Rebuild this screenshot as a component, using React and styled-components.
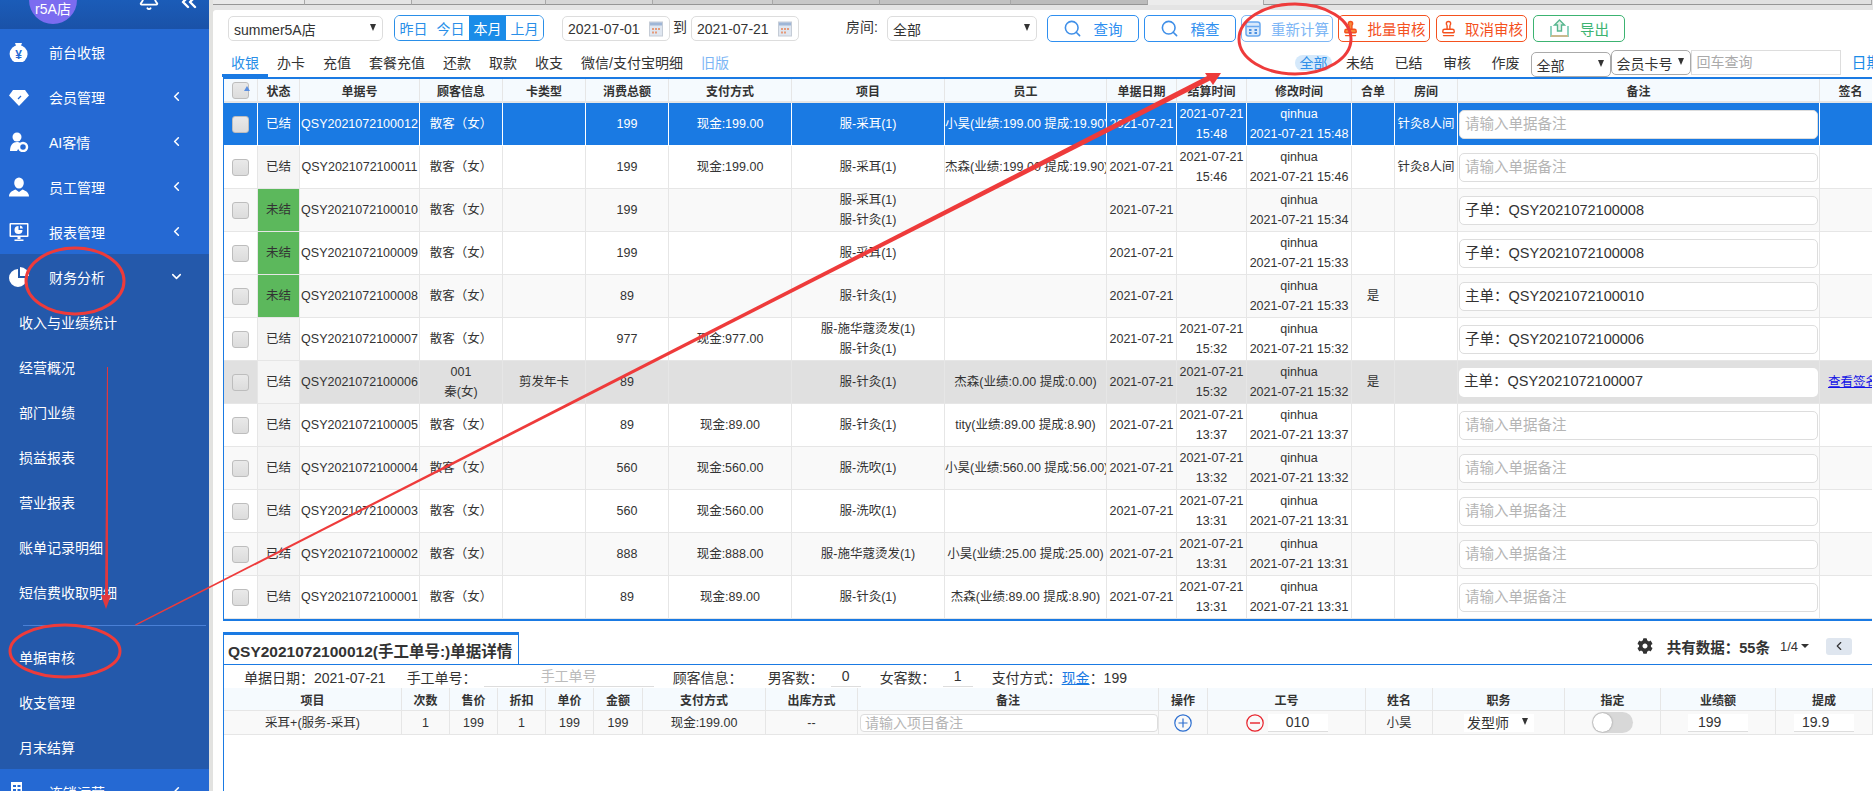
import React from 'react';
import styled, { createGlobalStyle } from 'styled-components';
import { Bell, ChevronsLeft, ChevronLeft, ChevronDown, Search, Stamp } from 'lucide-react';
import { FaCog } from 'react-icons/fa';

const Global = createGlobalStyle`
  html, body, #root { margin: 0; padding: 0; height: 100%; }
  body { overflow: hidden; background: #fff; color: #333; font: 13px "Liberation Sans", "Noto Sans CJK SC", sans-serif; }
  * { box-sizing: border-box; }
`;

const Page = styled.div`
  position: relative; display: flex; width: 1873px; height: 791px; overflow: hidden; background: #e2e2e0;
`;

/* ---------- sidebar ---------- */
const Sidebar = styled.aside`
  flex: none; width: 209px; height: 791px; overflow: hidden; background: #2569d3; color: #fff; font-size: 14px;
`;
const SideHead = styled.div`
  position: relative; height: 29px; overflow: hidden; display: flex; align-items: flex-end;
  background: linear-gradient(#1b5cb8, #1a52a8); padding: 0 0 5px 29px;
`;
const Avatar = styled.div`
  flex: none; width: 48px; height: 48px; border-radius: 50%; background: #7b6cf0;
  display: flex; align-items: center; justify-content: center; padding-top: 16px; font-size: 14px; color: #fff;
`;
const HeadIcon = styled.span`
  flex: none; display: flex; margin-left: ${p => p.$ml}px; margin-bottom: ${p => p.$mb}px; color: #fff;
`;
const SideItem = styled.div`
  position: relative; height: 45px; display: flex; align-items: center; padding-left: 9px; background: ${p => p.$dark ? '#2459ab' : 'transparent'};
`;
const SideIcon = styled.span`
  flex: none; width: 20px; height: 20px; display: flex; margin-right: 20px;
`;
const SideText = styled.span`
  flex: 1; letter-spacing: 0; white-space: nowrap;
`;
const SideChevron = styled.span`
  flex: none; display: flex; margin-right: 25px; color: #fff;
`;
const SubGroup = styled.div`
  background: #2459ab;
`;
const SubItem = styled.div`
  height: 45px; display: flex; align-items: center; padding-left: 19px;
`;
const SideRule = styled.div`
  height: 1px; margin: 11px 3px 8px 23px; background: #4a80d6;
`;

/* ---------- main ---------- */
const Main = styled.main`
  flex: none; width: 1660px; height: 791px; margin-left: 4px; display: flex; flex-direction: column; overflow: hidden;
`;
const TabStrip = styled.div`
  flex: none; height: 10px; background: #e4e4e4; display: flex; align-items: flex-start;
`;
const BrowserTab = styled.div`
  flex: none; width: ${p => p.$w}px; height: 5px; background: ${p => p.$active ? '#ececec' : p.$bg || '#cfcfcf'};
  border-bottom: ${p => p.$active ? 'none' : '1px solid #969696'};
  border-right: 1px solid #a8a8a8;
`;
const Sheet = styled.div`
  flex: 1; display: flex; flex-direction: column; background: #fff; border-radius: 3px 0 0 0; min-height: 0;
`;
const Toolbar = styled.div`
  flex: none; height: 40px; padding: 5px 0 0 15px; display: flex; align-items: flex-start; white-space: nowrap; font-size: 14px;
`;
const SelectBox = styled.div`
  flex: none; width: ${p => p.$w}px; height: ${p => p.$h || 25}px; margin-left: ${p => p.$ml || 0}px;
  margin-top: ${p => p.$mt || 1}px;
  display: flex; align-items: center; justify-content: space-between; padding: 0 6px 0 5px; font-size: 14px;
  background: #fff; border: 1px solid ${p => p.$line || '#ddd'}; border-radius: 5px; color: #333;
`;
const Caret = styled.span`
  flex: none; width: 0; height: 0; margin-bottom: 3px; border-left: 3.5px solid transparent; border-right: 3.5px solid transparent; border-top: 7px solid #333;
`;
const Segment = styled.div`
  flex: none; width: 150px; height: 26px; margin-left: 11px; display: flex; border: 1px solid #2a8fe8; border-radius: 6px; overflow: hidden;
`;
const SegItem = styled.div`
  flex: 1; display: flex; align-items: center; justify-content: center; color: ${p => p.$on ? '#fff' : '#2a8fe8'}; background: ${p => p.$on ? '#1a8ce8' : '#fff'};
`;
const PlainLabel = styled.span`
  flex: none; margin-left: ${p => p.$ml}px; line-height: 24px; color: #333;
`;
const ActionButton = styled.button`
  flex: none; width: ${p => p.$w || 92}px; height: 27px; margin-left: ${p => p.$ml}px; padding: 0; display: flex; align-items: center; justify-content: center; gap: ${p => p.$gap || 11}px;
  font: inherit; font-size: 14.5px; background: #fff; border: 1px solid ${p => p.$c}; border-radius: 5px; color: ${p => p.$c};
`;
const TabRow = styled.div`
  flex: none; height: 27px; display: flex; white-space: nowrap; font-size: 14px;
`;
const TabsBlock = styled.div`
  flex: none; width: 1082px; padding-left: 9px; display: flex; gap: 0;
`;
const TabLink = styled.div`
  flex: none; height: 27px; padding: 3px 9px 0; line-height: 20px; color: ${p => p.$on ? '#2a8fe8' : p.$old ? '#7db6f5' : '#333'};
  border-bottom: 3px solid ${p => p.$on ? '#1a7ae3' : 'transparent'};
`;
const FilterRow = styled.div`
  flex: none; display: flex; align-items: flex-start; padding-top: 1px;
`;
const FilterLink = styled.span`
  flex: none; height: 16px; line-height: 16px; margin: 4px 0 0; padding: 0 ${p => p.$on ? 4.5 : 0}px; margin-right: ${p => p.$on ? 14 : 20.5}px; border-radius: 8px;
  color: ${p => p.$on ? '#2e8fe8' : '#333'}; background: ${p => p.$on ? '#d5e9fb' : 'transparent'};
`;
const QueryInput = styled.div`
  flex: none; width: 150px; height: 25px; margin-top: -1px; padding-left: 5px; line-height: 23px; border: 1px solid #ddd; color: #aaa; font-size: 14px;
`;
const DateLink = styled.span`
  flex: none; margin: 2px 0 0 11px; color: #1a8ce8; font-size: 15px; line-height: 20px;
`;

/* ---------- tables ---------- */
const TableFrame = styled.div`
  flex: none; width: 1649px; margin-left: 10px; overflow: hidden; border-top: 2px solid #1a7ae3; border-left: 1px solid #1a7ae3; border-bottom: 2px solid #1a7ae3;
`;
const Grid = styled.table`
  table-layout: fixed; border-collapse: separate; border-spacing: 0; width: ${p => p.$w}px; font-size: 12.5px;
`;
const Head = styled.th`
  height: ${p => p.$h}px; padding: 0; position: relative; font-weight: 700; font-size: 12px; color: #333; background: #f5fafe; text-align: center; white-space: nowrap;
  border-right: 1px solid #e6e6e6; border-bottom: ${p => p.$thick ? 2 : 1}px solid #e6e6e6;
`;
const Row = styled.tr`
  background: ${p => p.$sel ? '#1a7ae3' : p.$mark ? '#e0e0e0' : p.$alt ? '#f9f9f9' : '#fff'};
  color: ${p => p.$sel ? '#fff' : '#333'};
`;
const Cell = styled.td`
  height: ${p => p.$h}px; padding: 0 ${p => p.$pad ?? 0}px; text-align: ${p => p.$left ? 'left' : 'center'}; white-space: nowrap; line-height: 20px; overflow: hidden;
  border-right: 1px solid ${p => p.$sel ? '#fff' : '#e6e6e6'}; border-bottom: 1px solid ${p => p.$sel ? '#fff' : '#e6e6e6'};
  background: ${p => p.$bg || 'transparent'};
`;
const Check = styled.span`
  display: inline-block; vertical-align: middle; width: 17px; height: 17px; background: linear-gradient(#e9e9e9, #dcdcdc); border: 1px solid #bdbdbd; border-radius: 3px;
`;
const SortMark = styled.span`
  position: absolute; right: 7px; top: 7px; width: 0; height: 0; border-left: 3px solid transparent; border-right: 3px solid transparent; border-bottom: 5px solid #5b8fe0;
`;
const Line = styled.div`
  line-height: 20px;
`;
const NoteInput = styled.div`
  width: 359px; height: 29px; margin-left: 1px; padding-left: 5px; text-align: left; line-height: 27px; font-size: 14.5px; background: #fff; border-radius: 5px;
  border: ${p => p.$bare ? 'none' : '1px solid #ddd'}; color: ${p => p.$empty ? '#b5b5b5' : '#333'};
`;
const SignLink = styled.a`
  display: block; margin-left: 8px; text-align: left; color: #1414e6; text-decoration: underline; font-size: 12.5px;
`;

/* ---------- detail ---------- */
const Detail = styled.section`
  flex: 1; width: 1649px; margin: 11px 0 0 10px; display: flex; flex-direction: column; border-left: 1px solid #1a7ae3; min-height: 0;
`;
const DetailHead = styled.div`
  flex: none; height: 33px; display: flex; align-items: center; border-bottom: 1px solid #1a7ae3; white-space: nowrap;
`;
const DetailTab = styled.div`
  flex: none; width: 295px; height: 32px; padding: 3px 0 0 4px; line-height: 28px; font-size: 15.5px; font-weight: 700; color: #333; border-top: 3px solid #1a7ae3; border-right: 1px solid #1a7ae3;
`;
const Pager = styled.div`
  margin-left: auto; padding: 0 20px 4px 0; display: flex; align-items: center; font-size: 14.5px; font-weight: 700; color: #333;
`;
const PageNum = styled.span`
  margin-left: 10px; font-weight: 400; font-size: 13px; display: flex; align-items: center; gap: 3px;
`;
const DropTip = styled.span`
  width: 0; height: 0; border-left: 4px solid transparent; border-right: 4px solid transparent; border-top: 4px solid #333;
`;
const PageBtn = styled.span`
  width: 26px; height: 17px; margin-left: 17px; border-radius: 3px; background: #dfe6ef; display: flex; align-items: center; justify-content: center;
`;
const InfoRow = styled.div`
  flex: none; height: 23px; padding-left: 20px; display: flex; align-items: center; white-space: nowrap; font-size: 14px; color: #333;
`;
const InfoItem = styled.span`
  flex: none; margin-left: ${p => p.$ml || 0}px;
`;
const UnderInput = styled.span`
  flex: none; width: ${p => p.$w}px; height: 20px; margin-left: 7px; text-align: center; line-height: 19px; border-bottom: 1px solid #ddd; color: ${p => p.$ph ? '#bbb' : '#333'};
`;
const PayLink = styled.a`
  color: #1a7ae3; text-decoration: underline;
`;
const DetailNote = styled.div`
  width: 298px; height: 18px; margin-left: 2px; padding-left: 4px; text-align: left; font-size: 14px; line-height: 16px; color: #b5b5b5; background: #fff; border: 1px solid #ddd; border-radius: 4px;
`;
const RoundBtn = styled.span`
  display: inline-flex; vertical-align: middle;
`;
const CodeBox = styled.div`
  display: flex; align-items: center; justify-content: center; gap: 4px;
`;
const NumInput = styled.span`
  display: inline-block; width: ${p => p.$w}px; height: 18px; padding-left: ${p => p.$pl || 0}px; line-height: 17px; font-size: 14px; text-align: ${p => p.$pl ? 'left' : 'center'}; background: #fff; border-bottom: 1px solid #ddd;
`;
const RoleSelect = styled.div`
  width: 70px; height: 18px; margin-left: 31px; padding: 0 6px 0 3px; display: flex; align-items: center; justify-content: space-between; font-size: 14px; background: #fff;
`;
const Toggle = styled.span`
  display: inline-block; position: relative; width: 41px; height: 21px; vertical-align: middle; background: #d8d8d8; border-radius: 11px;
`;
const Knob = styled.span`
  position: absolute; left: 1px; top: 1px; width: 19px; height: 19px; background: #fff; border-radius: 50%; box-shadow: 0 0 2px rgba(0,0,0,.4);
`;
const Annotations = styled.svg`
  position: absolute; left: 0; top: 0; width: 1873px; height: 791px; pointer-events: none;
`;

/* ---------- icons ---------- */
const BLUE = '#2569d3';
const MoneyIcon = () => (
  <svg width="20" height="20" viewBox="0 0 20 20">
    <path d="M6 1h7l-1.5 4h-4z" fill="#fff" />
    <circle cx="9.6" cy="12" r="9" fill="#fff" />
    <text x="9.6" y="16.5" textAnchor="middle" fontSize="12" fontWeight="700" fill={BLUE} fontFamily="Liberation Sans">¥</text>
  </svg>
);
const GemIcon = () => (
  <svg width="20" height="20" viewBox="0 0 20 20">
    <path d="M4 3h12l4 5.5L10 19 0 8.5z" fill="#fff" />
    <path d="M9 12l3-3" stroke={BLUE} strokeWidth="1.3" />
  </svg>
);
const AiIcon = () => (
  <svg width="20" height="20" viewBox="0 0 20 20">
    <circle cx="8" cy="5" r="4.5" fill="#fff" />
    <path d="M1 19c0-6 3-9 7-9 1.500 0 3 .5 4 1.500L8 19z" fill="#fff" />
    <circle cx="14" cy="15" r="4" fill="none" stroke="#fff" strokeWidth="2.500" />
  </svg>
);
const StaffIcon = () => (
  <svg width="20" height="20" viewBox="0 0 20 20">
    <ellipse cx="10" cy="6" rx="4.800" ry="5.500" fill="#fff" />
    <path d="M0 19.500c0-4 3-5.500 6.500-7L10 15l3.500-2.500c3.500 1.500 6.500 3 6.500 7z" fill="#fff" />
  </svg>
);
const ReportIcon = () => (
  <svg width="20" height="20" viewBox="0 0 20 20">
    <rect x="0.500" y="1" width="19" height="14" rx="1" fill="#fff" />
    <rect x="2" y="2.500" width="16" height="11" fill={BLUE} />
    <path d="M9.500 4a4 4 0 1 0 4 4h-4z" fill="#fff" />
    <path d="M11 3.500a3.500 3.500 0 0 1 3 3h-3z" fill="#fff" />
    <path d="M8.500 15h3v2h-3zM5.500 17.500h9V19h-9z" fill="#fff" />
  </svg>
);
const PieIcon = () => (
  <svg width="20" height="20" viewBox="0 0 20 20">
    <path d="M9 2a9 9 0 1 0 9 9H9z" fill="#fff" />
    <path d="M11 0a9 9 0 0 1 9 9h-9z" fill="#fff" />
  </svg>
);
const OfficeIcon = () => (
  <svg width="20" height="20" viewBox="0 0 20 20">
    <path d="M2 0h11v20H2zM13 10h6v10h-6z" fill="#fff" />
    <path d="M4 3h3v2H4zM8.500 3h3v2h-3zM4 7h3v2H4zM8.500 7h3v2h-3z" fill={BLUE} />
  </svg>
);
const CalendarIcon = () => (
  <svg width="14" height="16" viewBox="0 0 14 16">
    <rect x="0.500" y="1" width="13" height="14" fill="#dfe6f0" stroke="#c5ccd6" />
    <rect x="1" y="1.500" width="12" height="3" fill="#9fb6d6" />
    <path d="M3 7h2v2H3zM6 7h2v2H6zM9 7h2v2H9zM3 10.500h2v2H3zM6 10.500h2v2H6z" fill="#e59a7a" />
  </svg>
);
const RecalcIcon = () => (
  <svg width="16" height="16" viewBox="0 0 16 16">
    <rect x="1" y="1" width="14" height="14" rx="2.500" fill="#d9e9fb" stroke="#6aa9ef" strokeWidth="1.500" />
    <path d="M1.500 5.500h13" stroke="#6aa9ef" strokeWidth="1.500" />
    <path d="M4 8h2.500v2H4zM9.500 8H12v2H9.500zM4 11h2.500v2H4zM9.500 11H12v2H9.500z" fill="#4b90e0" />
  </svg>
);
const ExportIcon = () => (
  <svg width="21" height="19" viewBox="0 0 21 19">
    <path d="M2 7v10h17V7" fill="none" stroke="#8fd3c0" strokeWidth="2" />
    <path d="M2 17h17" stroke="#c9b98e" strokeWidth="2" />
    <path d="M10.500 1l5 5h-3v6h-4V6h-3z" fill="#e6f3ea" stroke="#57b68f" strokeWidth="1.400" />
  </svg>
);
const PlusIcon = () => (
  <svg width="18" height="18" viewBox="0 0 18 18">
    <circle cx="9" cy="9" r="8.200" fill="none" stroke="#2d6fd0" strokeWidth="1.200" />
    <path d="M9 4.500v9M4.500 9h9" stroke="#2d6fd0" strokeWidth="1.200" />
  </svg>
);
const MinusIcon = () => (
  <svg width="18" height="18" viewBox="0 0 18 18">
    <circle cx="9" cy="9" r="8.200" fill="none" stroke="#e8212a" strokeWidth="1.200" />
    <path d="M4 9h10" stroke="#e8212a" strokeWidth="1.400" />
  </svg>
);

/* ---------- data ---------- */
const MAIN_COLS = [
  ['', 34], ['状态', 42], ['单据号', 120], ['顾客信息', 83], ['卡类型', 83], ['消费总额', 83], ['支付方式', 123], ['项目', 153],
  ['员工', 162], ['单据日期', 70], ['结算时间', 70], ['修改时间', 105], ['合单', 43], ['房间', 63], ['备注', 362], ['签名', 62],
];
const GUEST = ['散客（女）'];
const ROWS = [
  { st: '已结', no: '12', cu: GUEST, total: '199', pay: '现金:199.00', items: ['服-采耳(1)'], staff: '小昊(业绩:199.00 提成:19.90)', set: '15:48', mod: '15:48', room: '针灸8人间', sel: true },
  { st: '已结', no: '11', cu: GUEST, total: '199', pay: '现金:199.00', items: ['服-采耳(1)'], staff: '杰森(业绩:199.00 提成:19.90)', set: '15:46', mod: '15:46', room: '针灸8人间' },
  { st: '未结', no: '10', cu: GUEST, total: '199', items: ['服-采耳(1)', '服-针灸(1)'], mod: '15:34', note: '子单：QSY2021072100008' },
  { st: '未结', no: '09', cu: GUEST, total: '199', items: ['服-采耳(1)'], mod: '15:33', note: '子单：QSY2021072100008' },
  { st: '未结', no: '08', cu: GUEST, total: '89', items: ['服-针灸(1)'], mod: '15:33', merge: '是', note: '主单：QSY2021072100010' },
  { st: '已结', no: '07', cu: GUEST, total: '977', pay: '现金:977.00', items: ['服-施华蔻烫发(1)', '服-针灸(1)'], set: '15:32', mod: '15:32', note: '子单：QSY2021072100006' },
  { st: '已结', no: '06', cu: ['001', '秦(女)'], card: '剪发年卡', total: '89', items: ['服-针灸(1)'], staff: '杰森(业绩:0.00 提成:0.00)', set: '15:32', mod: '15:32', merge: '是', note: '主单：QSY2021072100007', sign: true, mark: true },
  { st: '已结', no: '05', cu: GUEST, total: '89', pay: '现金:89.00', items: ['服-针灸(1)'], staff: 'tity(业绩:89.00 提成:8.90)', set: '13:37', mod: '13:37' },
  { st: '已结', no: '04', cu: GUEST, total: '560', pay: '现金:560.00', items: ['服-洗吹(1)'], staff: '小昊(业绩:560.00 提成:56.00)', set: '13:32', mod: '13:32' },
  { st: '已结', no: '03', cu: GUEST, total: '560', pay: '现金:560.00', items: ['服-洗吹(1)'], set: '13:31', mod: '13:31' },
  { st: '已结', no: '02', cu: GUEST, total: '888', pay: '现金:888.00', items: ['服-施华蔻烫发(1)'], staff: '小昊(业绩:25.00 提成:25.00)', set: '13:31', mod: '13:31' },
  { st: '已结', no: '01', cu: GUEST, total: '89', pay: '现金:89.00', items: ['服-针灸(1)'], staff: '杰森(业绩:89.00 提成:8.90)', set: '13:31', mod: '13:31' },
];
const DETAIL_COLS = [
  ['项目', 178], ['次数', 48], ['售价', 48], ['折扣', 48], ['单价', 48], ['金额', 49], ['支付方式', 123], ['出库方式', 92], ['备注', 301],
  ['操作', 49], ['工号', 158], ['姓名', 67], ['职务', 132], ['指定', 96], ['业绩额', 115], ['提成', 97],
];
const TOP_ITEMS = [
  ['前台收银', MoneyIcon, false], ['会员管理', GemIcon, true], ['AI客情', AiIcon, true], ['员工管理', StaffIcon, true], ['报表管理', ReportIcon, true],
];
const SUB_ITEMS = ['收入与业绩统计', '经营概况', '部门业绩', '损益报表', '营业报表', '账单记录明细', '短信费收取明细'];
const SUB_ITEMS_2 = ['单据审核', '收支管理', '月末结算'];
const TABS = ['办卡', '充值', '套餐充值', '还款', '取款', '收支', '微信/支付宝明细'];
const STRIP = [[92, '#e9e9e9'], [107, '#e4e4e4'], [134, '#dcdcdc'], [107, '#d6d6d6'], [120, '#cfcfcf'], [107, '#c8c8c8'], [131, '#c2c2c2'], [137, '#bcbcbc']];

function MainRow({ r, i }) {
  const sel = !!r.sel;
  const c = { $h: 43, $sel: sel };
  const stBg = sel ? 'transparent' : r.st === '未结' ? '#5cb85c' : '#f5f5f5';
  const empty = !r.note;
  return (
    <Row $sel={sel} $mark={r.mark} $alt={i % 2 === 0}>
      <Cell {...c}><Check /></Cell>
      <Cell {...c} $bg={stBg}>{r.st}</Cell>
      <Cell {...c}>QSY20210721000{r.no}</Cell>
      <Cell {...c}>{r.cu.map(t => <Line key={t}>{t}</Line>)}</Cell>
      <Cell {...c}>{r.card}</Cell>
      <Cell {...c}>{r.total}</Cell>
      <Cell {...c}>{r.pay}</Cell>
      <Cell {...c}>{r.items.map(t => <Line key={t}>{t}</Line>)}</Cell>
      <Cell {...c}>{r.staff}</Cell>
      <Cell {...c}>2021-07-21</Cell>
      <Cell {...c}>{r.set && <><Line>2021-07-21</Line><Line>{r.set}</Line></>}</Cell>
      <Cell {...c}><Line>qinhua</Line><Line>2021-07-21 {r.mod}</Line></Cell>
      <Cell {...c}>{r.merge}</Cell>
      <Cell {...c}>{r.room}</Cell>
      <Cell {...c}><NoteInput $empty={empty} $bare={r.mark}>{r.note || '请输入单据备注'}</NoteInput></Cell>
      <Cell {...c}>{r.sign && <SignLink>查看签名</SignLink>}</Cell>
    </Row>
  );
}

export default function App() {
  return (
    <Page>
      <Global />
      <Sidebar>
        <SideHead>
          <Avatar>r5A店</Avatar>
          <HeadIcon $ml={61} $mb={13}><Bell size={22} strokeWidth={2} /></HeadIcon>
          <HeadIcon $ml={17} $mb={10}><ChevronsLeft size={24} strokeWidth={2.4} /></HeadIcon>
        </SideHead>
        {TOP_ITEMS.map(([t, Ico, chev]) => (
          <SideItem key={t}>
            <SideIcon><Ico /></SideIcon>
            <SideText>{t}</SideText>
            {chev && <SideChevron><ChevronLeft size={15} strokeWidth={2.5} /></SideChevron>}
          </SideItem>
        ))}
        <SubGroup>
          <SideItem>
            <SideIcon><PieIcon /></SideIcon>
            <SideText>财务分析</SideText>
            <SideChevron><ChevronDown size={15} strokeWidth={2.5} /></SideChevron>
          </SideItem>
          {SUB_ITEMS.map(t => <SubItem key={t}>{t}</SubItem>)}
          <SideRule />
          {SUB_ITEMS_2.map(t => <SubItem key={t}>{t}</SubItem>)}
        </SubGroup>
        <SideItem>
          <SideIcon><OfficeIcon /></SideIcon>
          <SideText>连锁运营</SideText>
          <SideChevron><ChevronLeft size={15} strokeWidth={2.5} /></SideChevron>
        </SideItem>
      </Sidebar>

      <Main>
        <TabStrip>
          {STRIP.map(([w, bg], i) => <BrowserTab key={i} $w={w} $bg={bg} />)}
          <BrowserTab $w={116} $active />
          <BrowserTab $w={608} $bg="#e0e0e0" />
        </TabStrip>
        <Sheet>
          <Toolbar>
            <SelectBox $w={155}>summer5A店<Caret /></SelectBox>
            <Segment>
              <SegItem>昨日</SegItem><SegItem>今日</SegItem><SegItem $on>本月</SegItem><SegItem>上月</SegItem>
            </Segment>
            <SelectBox $w={108} $ml={18}>2021-07-01<CalendarIcon /></SelectBox>
            <PlainLabel $ml={3}>到</PlainLabel>
            <SelectBox $w={108} $ml={4}>2021-07-21<CalendarIcon /></SelectBox>
            <PlainLabel $ml={47}>房间:</PlainLabel>
            <SelectBox $w={150} $ml={9}>全部<Caret /></SelectBox>
            <ActionButton $ml={10} $c="#2e8ff0"><Search size={19} color="#3f8fe8" />查询</ActionButton>
            <ActionButton $ml={5} $c="#2e8ff0"><Search size={19} color="#3f8fe8" />稽查</ActionButton>
            <ActionButton $ml={5} $c="#7db6f5" $gap={10}><RecalcIcon />重新计算</ActionButton>
            <ActionButton $ml={5} $c="#f4511e" $gap={8}><Stamp size={17} fill="#f58a3c" color="#f4511e" />批量审核</ActionButton>
            <ActionButton $ml={6} $w={91} $c="#f4511e" $gap={8}><Stamp size={17} color="#f4511e" />取消审核</ActionButton>
            <ActionButton $ml={6} $c="#3cb371" $gap={10}><ExportIcon />导出</ActionButton>
          </Toolbar>
          <TabRow>
            <TabsBlock>
              <TabLink $on>收银</TabLink>
              {TABS.map(t => <TabLink key={t}>{t}</TabLink>)}
              <TabLink $old>旧版</TabLink>
            </TabsBlock>
            <FilterRow>
              <FilterLink $on>全部</FilterLink>
              <FilterLink>未结</FilterLink>
              <FilterLink>已结</FilterLink>
              <FilterLink>审核</FilterLink>
              <FilterLink>作废</FilterLink>
              <SelectBox $w={80} $ml={-9.500} $line="#aaa">全部<Caret /></SelectBox>
              <SelectBox $w={80} $mt={-1} $line="#aaa">会员卡号<Caret /></SelectBox>
              <QueryInput>回车查询</QueryInput>
              <DateLink>日期查询</DateLink>
            </FilterRow>
          </TabRow>
          <TableFrame>
            <Grid $w={1658}>
              <colgroup>{MAIN_COLS.map(([, w], i) => <col key={i} width={w} />)}</colgroup>
              <thead>
                <tr>
                  {MAIN_COLS.map(([t], i) => (
                    <Head key={i} $h={24} $thick>{i === 0 ? <><Check /><SortMark /></> : t}</Head>
                  ))}
                </tr>
              </thead>
              <tbody>
                {ROWS.map((r, i) => <MainRow key={r.no} r={r} i={i} />)}
              </tbody>
            </Grid>
          </TableFrame>
          <Detail>
            <DetailHead>
              <DetailTab>QSY2021072100012(手工单号:)单据详情</DetailTab>
              <Pager>
                <FaCog size={16} />
                <InfoItem $ml={14}>共有数据：55条</InfoItem>
                <PageNum>1/4<DropTip /></PageNum>
                <PageBtn><ChevronLeft size={14} color="#333" /></PageBtn>
              </Pager>
            </DetailHead>
            <InfoRow>
              <InfoItem>单据日期：2021-07-21</InfoItem>
              <InfoItem $ml={21}>手工单号：</InfoItem>
              <UnderInput $w={170} $ph>手工单号</UnderInput>
              <InfoItem $ml={19}>顾客信息：</InfoItem>
              <InfoItem $ml={25}>男客数：</InfoItem>
              <UnderInput $w={30}>0</UnderInput>
              <InfoItem $ml={19}>女客数：</InfoItem>
              <UnderInput $w={30}>1</UnderInput>
              <InfoItem $ml={19}>支付方式：<PayLink>现金</PayLink>：199</InfoItem>
            </InfoRow>
            <Grid $w={1649}>
              <colgroup>{DETAIL_COLS.map(([, w], i) => <col key={i} width={w} />)}</colgroup>
              <thead>
                <tr>{DETAIL_COLS.map(([t]) => <Head key={t} $h={23}>{t}</Head>)}</tr>
              </thead>
              <tbody>
                <Row $alt>
                  <Cell $h={24}>采耳+(服务-采耳)</Cell>
                  <Cell $h={24}>1</Cell>
                  <Cell $h={24}>199</Cell>
                  <Cell $h={24}>1</Cell>
                  <Cell $h={24}>199</Cell>
                  <Cell $h={24}>199</Cell>
                  <Cell $h={24}>现金:199.00</Cell>
                  <Cell $h={24}>--</Cell>
                  <Cell $h={24}><DetailNote>请输入项目备注</DetailNote></Cell>
                  <Cell $h={24}><RoundBtn><PlusIcon /></RoundBtn></Cell>
                  <Cell $h={24}><CodeBox><RoundBtn><MinusIcon /></RoundBtn><NumInput $w={60}>010</NumInput></CodeBox></Cell>
                  <Cell $h={24}>小昊</Cell>
                  <Cell $h={24}><RoleSelect>发型师<Caret /></RoleSelect></Cell>
                  <Cell $h={24}><Toggle><Knob /></Toggle></Cell>
                  <Cell $h={24}><NumInput $w={60} $pl={10}>199</NumInput></Cell>
                  <Cell $h={24}><NumInput $w={60} $pl={8}>19.9</NumInput></Cell>
                </Row>
              </tbody>
            </Grid>
          </Detail>
        </Sheet>
      </Main>

      <Annotations viewBox="0 0 1873 791">
        <g fill="none" stroke="#ee3b3b" strokeWidth="3">
          <ellipse cx="1295" cy="39" rx="56" ry="35" />
          <ellipse cx="75" cy="281" rx="49" ry="33" />
          <ellipse cx="65" cy="651" rx="55" ry="26" />
        </g>
        <path d="M135 624.500 L1212 73.500 L1215 78 L136 625.500 Z" fill="#ee3b3b" />
        <path d="M1221 73 L1205 73 L1213 85 Z" fill="#ee3b3b" />
        <path d="M107 367 L108 367 L108 600 L105 600 Z" fill="#e0383e" />
        <path d="M106 609 L101 595 L111 595 Z" fill="#e0383e" />
      </Annotations>
    </Page>
  );
}
